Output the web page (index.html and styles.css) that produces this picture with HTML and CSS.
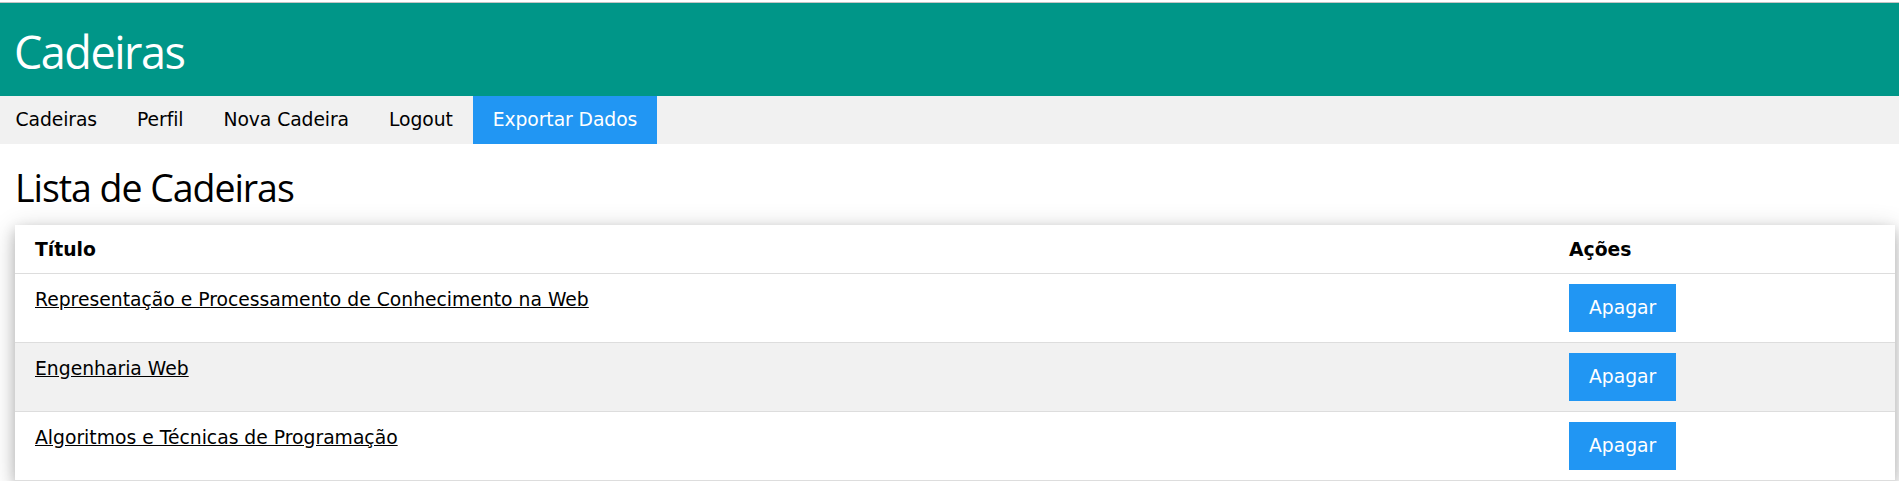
FILE: index.html
```html
<!DOCTYPE html>
<html lang="pt">
<head>
<meta charset="utf-8">
<title>Cadeiras</title>
<link rel="stylesheet" href="styles.css">
</head>
<body>
<div class="topline"></div>
<header class="header">
  <h1 class="header-title">Cadeiras</h1>
</header>
<nav class="bar">
  <a class="bar-item first" href="#">Cadeiras</a>
  <a class="bar-item" href="#">Perfil</a>
  <a class="bar-item" href="#">Nova Cadeira</a>
  <a class="bar-item" href="#">Logout</a>
  <a class="bar-item active" href="#">Exportar Dados</a>
</nav>
<main class="content">
  <h2 class="page-title">Lista de Cadeiras</h2>
  <div class="card">
    <table class="table">
      <thead>
        <tr><th class="col-title">Título</th><th class="col-actions">Ações</th></tr>
      </thead>
      <tbody>
        <tr>
          <td class="col-title"><a class="link" href="#">Representação e Processamento de Conhecimento na Web</a></td>
          <td class="col-actions"><button class="btn">Apagar</button></td>
        </tr>
        <tr>
          <td class="col-title"><a class="link" href="#">Engenharia Web</a></td>
          <td class="col-actions"><button class="btn">Apagar</button></td>
        </tr>
        <tr>
          <td class="col-title"><a class="link" href="#">Algoritmos e Técnicas de Programação</a></td>
          <td class="col-actions"><button class="btn">Apagar</button></td>
        </tr>
      </tbody>
    </table>
  </div>
</main>
</body>
</html>
```
FILE: styles.css
```css
html, body {
  margin: 0;
  padding: 0;
}
body {
  font-family: "DejaVu Sans", Verdana, sans-serif;
  font-size: 18.75px;
  line-height: 1.5;
  color: #000;
  background: #fff;
}
.topline {
  height: 2px;
  background: #fff;
  border-bottom: 1px solid #c4c4c4;
}
.header {
  background: #009688;
  color: #fff;
  padding: 0 14px;
}
.header-title {
  margin: 0;
  padding: 14.5px 0 10.5px;
  font-family: "Open Sans", "Segoe UI", Arial, sans-serif;
  font-weight: 400;
  font-size: 45px;
  line-height: 67.5px;
  letter-spacing: -1.5px;
}
.bar {
  display: flex;
  background: #f1f1f1;
}
.bar-item {
  display: block;
  padding: 10px 20px;
  color: #000;
  text-decoration: none;
  line-height: 28px;
  letter-spacing: -0.08px;
}
.bar-item.first {
  padding-left: 15.5px;
}
.bar-item.active {
  background: #2196f3;
  color: #fff;
}
.content {
  padding: 0;
}
.page-title {
  margin: 0;
  padding: 16px 15px 9px;
  font-family: "Open Sans", "Segoe UI", Arial, sans-serif;
  font-weight: 400;
  font-size: 37.5px;
  line-height: 56px;
  letter-spacing: -1.05px;
}
.card {
  margin: 0 4px 0 15px;
  background: #fff;
  box-shadow: 0 5px 12.5px 0 rgba(0,0,0,0.2), 0 5px 25px 0 rgba(0,0,0,0.19);
}
.table {
  width: 100%;
  border-collapse: collapse;
  border-spacing: 0;
  table-layout: fixed;
}
.table th, .table td {
  padding: 10px;
  text-align: left;
  vertical-align: top;
  line-height: 28px;
  border-bottom: 1px solid #ddd;
}
.table th {
  font-weight: 700;
  padding-top: 11px;
  padding-bottom: 9px;
}
.table .col-title {
  width: 1514px;
  padding-left: 20px;
}
.table .col-actions {
  padding-right: 20px;
}
.table tbody tr:nth-child(even) {
  background: #f1f1f1;
}
.link {
  position: relative;
  top: 2px;
  color: #000;
  text-decoration: underline;
}
.btn {
  display: inline-block;
  border: none;
  margin: 0;
  padding: 10px 20px;
  background: #2196f3;
  color: #fff;
  font-family: inherit;
  font-size: 18.75px;
  line-height: 28px;
  cursor: pointer;
}
```
